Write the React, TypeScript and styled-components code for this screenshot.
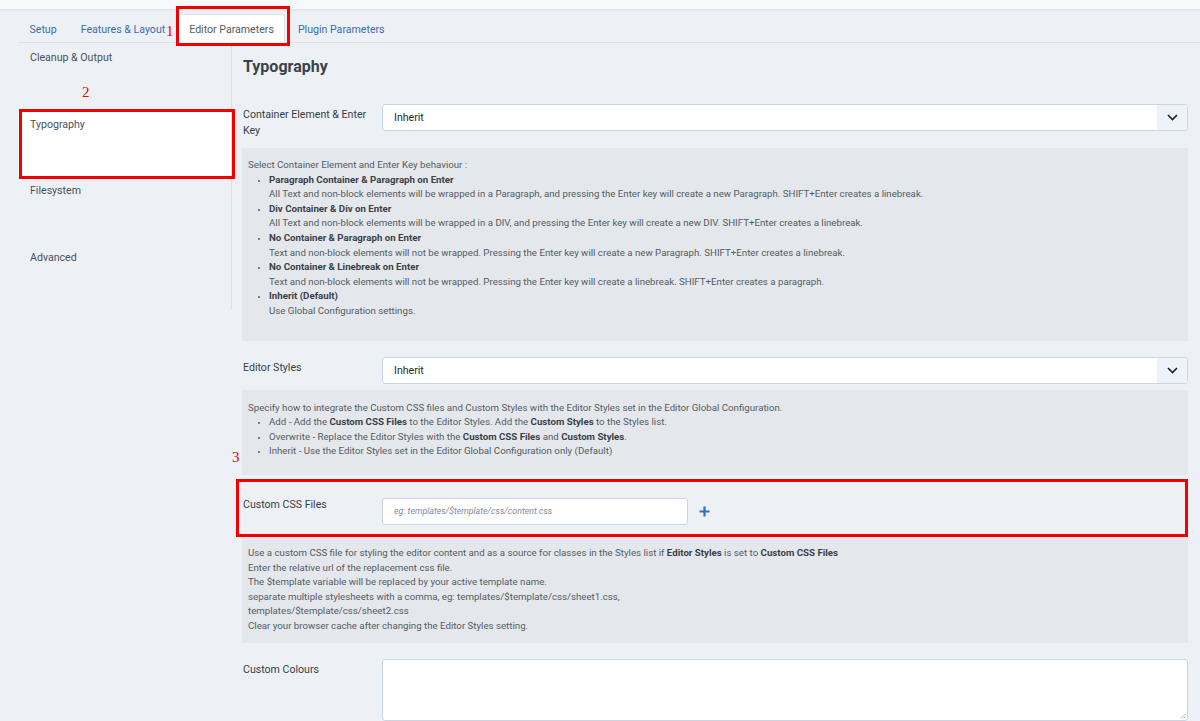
import React from 'react';
import styled, { createGlobalStyle } from 'styled-components';

const GlobalStyle = createGlobalStyle`
  html, body {
    margin: 0;
    padding: 0;
    background: #edf1f5;
    font-family: Roboto, "Liberation Sans", Arial, sans-serif;
    color: #3b4148;
  }
  * { box-sizing: border-box; }
`;

const Page = styled.div`
  position: relative;
  width: 1200px;
  height: 721px;
  overflow: hidden;
`;

const TopStrip = styled.div`
  height: 10px;
  background: #f7f9fb;
  border-bottom: 1px solid #e2e6eb;
  box-shadow: 0 1px 2px rgba(0, 0, 0, 0.03);
`;

const Shell = styled.div`
  padding-left: 18px;
`;

const TabBar = styled.nav`
  display: flex;
  margin-top: 4px;
  height: 29px;
  border-bottom: 1px solid #dce1e6;
`;

const Tab = styled.a<{ $active?: boolean }>`
  display: block;
  height: 29px;
  padding: 0 10.5px;
  margin-right: 1px;
  font-size: 10.6px;
  line-height: 30px;
  color: ${({ $active }) => ($active ? '#545a61' : '#3a6cb3')};
  background: ${({ $active }) => ($active ? '#ffffff' : 'transparent')};
  border: 1px solid ${({ $active }) => ($active ? '#dce1e6' : 'transparent')};
  border-bottom: none;
  border-radius: 3px 3px 0 0;
  cursor: pointer;
`;

const Body = styled.div`
  display: flex;
  align-items: flex-start;
`;

const Sidebar = styled.aside`
  width: 214px;
  flex-shrink: 0;
  border-right: 1px solid #dde2e7;
`;

const SideItem = styled.div<{ $active?: boolean }>`
  height: 66.7px;
  padding: 8px 12px;
  font-size: 10.6px;
  line-height: 14px;
  color: #4a5059;
  background: ${({ $active }) => ($active ? '#ffffff' : 'transparent')};
`;

const Main = styled.main`
  flex: 1;
  padding: 0 12px 0 10px;
`;

const Heading = styled.h2`
  margin: 13px 0 26px 1px;
  font-size: 16px;
  line-height: 22px;
  font-weight: 700;
  color: #3c4249;
`;

const Group = styled.section`
  & + & {
    margin-top: 16px;
  }
`;

const FieldRow = styled.div<{ $inset?: boolean }>`
  display: flex;
  align-items: flex-start;
  padding: ${({ $inset }) => ($inset ? '3px 0 6px' : '0')};
`;

const Label = styled.label`
  width: 140px;
  flex-shrink: 0;
  padding: 3px 6px 3px 1px;
  font-size: 10.6px;
  line-height: 16px;
  color: #373d44;
`;

const SelectBox = styled.div`
  flex: 1;
  display: flex;
  height: 27px;
  background: #ffffff;
  border: 1px solid #cbd5e1;
  border-radius: 3px;
  overflow: hidden;
`;

const SelectValue = styled.span`
  flex: 1;
  padding: 0 11px;
  font-size: 10.6px;
  line-height: 25px;
  color: #24292f;
`;

const SelectCaret = styled.span`
  width: 30px;
  display: flex;
  align-items: center;
  justify-content: center;
  background: #eef3fa;
`;

const Desc = styled.div<{ $pt: number; $pb: number }>`
  margin-top: 6px;
  padding: ${({ $pt, $pb }) => `${$pt}px 6px ${$pb}px`};
  background: #e4e8ec;
  font-size: 9.7px;
  line-height: 14.6px;
  color: #555b63;

  b {
    font-weight: 700;
    color: #3a4047;
  }
`;

const DescList = styled.ul`
  margin: 0;
  padding-left: 21px;
  list-style: disc;

  li::marker {
    font-size: 8px;
  }
`;

const InputWrap = styled.div`
  display: flex;
  align-items: center;
  margin-top: 4px;
`;

const TextInput = styled.div`
  width: 306px;
  height: 27px;
  padding: 0 11px;
  background: #ffffff;
  border: 1px solid #cbd5e1;
  border-radius: 3px;
  font-size: 8.8px;
  line-height: 25px;
  font-style: italic;
  color: #858b93;
`;

const AddButton = styled.span`
  display: flex;
  margin-left: 11px;
  cursor: pointer;
`;

const TextArea = styled.div`
  position: relative;
  flex: 1;
  height: 62px;
  background: #ffffff;
  border: 1px solid #cbd5e1;
  border-radius: 3px;
`;

const Grip = styled.svg`
  position: absolute;
  right: 1px;
  bottom: 1px;
`;

/* red hand-drawn annotation marks laid over the screenshot */
const Mark = styled.div<{ $x: number; $y: number; $w: number; $h: number }>`
  position: absolute;
  left: ${({ $x }) => $x}px;
  top: ${({ $y }) => $y}px;
  width: ${({ $w }) => $w}px;
  height: ${({ $h }) => $h}px;
  border: 3px solid #f00000;
  pointer-events: none;
`;

const MarkNum = styled.span<{ $x: number; $y: number }>`
  position: absolute;
  left: ${({ $x }) => $x}px;
  top: ${({ $y }) => $y}px;
  font-family: "Liberation Serif", "DejaVu Serif", serif;
  font-size: 15px;
  line-height: 15px;
  color: #f00000;
`;

const Chevron = () => (
  <svg width="11" height="7" viewBox="0 0 11 7">
    <path d="M1 1l4.5 4.5L10 1" fill="none" stroke="#1f2429" strokeWidth="1.7" />
  </svg>
);

const Plus = () => (
  <svg width="11" height="11" viewBox="0 0 11 11">
    <path d="M5.5 0.5v10M0.5 5.5h10" stroke="#2f6ebd" strokeWidth="2.2" />
  </svg>
);

const tabs = ['Setup', 'Features & Layout', 'Editor Parameters', 'Plugin Parameters'];
const sections = ['Cleanup & Output', 'Typography', 'Filesystem', 'Advanced'];

const App: React.FC = () => {
  return (
    <Page>
      <GlobalStyle />
      <TopStrip />
      <Shell>
        <TabBar>
          {tabs.map((t) => (
            <Tab key={t} $active={t === 'Editor Parameters'}>
              {t}
            </Tab>
          ))}
        </TabBar>

        <Body>
          <Sidebar>
            {sections.map((s) => (
              <SideItem key={s} $active={s === 'Typography'}>
                {s}
              </SideItem>
            ))}
          </Sidebar>

          <Main>
            <Heading>Typography</Heading>

            <Group>
              <FieldRow>
                <Label>Container Element &amp; Enter Key</Label>
                <SelectBox>
                  <SelectValue>Inherit</SelectValue>
                  <SelectCaret>
                    <Chevron />
                  </SelectCaret>
                </SelectBox>
              </FieldRow>
              <Desc $pt={10} $pb={22}>
                Select Container Element and Enter Key behaviour :
                <DescList>
                  <li>
                    <b>Paragraph Container &amp; Paragraph on Enter</b>
                    <br />
                    All Text and non-block elements will be wrapped in a Paragraph, and pressing the Enter key will
                    create a new Paragraph. SHIFT+Enter creates a linebreak.
                  </li>
                  <li>
                    <b>Div Container &amp; Div on Enter</b>
                    <br />
                    All Text and non-block elements will be wrapped in a DIV, and pressing the Enter key will create a
                    new DIV. SHIFT+Enter creates a linebreak.
                  </li>
                  <li>
                    <b>No Container &amp; Paragraph on Enter</b>
                    <br />
                    Text and non-block elements will not be wrapped. Pressing the Enter key will create a new
                    Paragraph. SHIFT+Enter creates a linebreak.
                  </li>
                  <li>
                    <b>No Container &amp; Linebreak on Enter</b>
                    <br />
                    Text and non-block elements will not be wrapped. Pressing the Enter key will create a linebreak.
                    SHIFT+Enter creates a paragraph.
                  </li>
                  <li>
                    <b>Inherit (Default)</b>
                    <br />
                    Use Global Configuration settings.
                  </li>
                </DescList>
              </Desc>
            </Group>

            <Group>
              <FieldRow>
                <Label>Editor Styles</Label>
                <SelectBox>
                  <SelectValue>Inherit</SelectValue>
                  <SelectCaret>
                    <Chevron />
                  </SelectCaret>
                </SelectBox>
              </FieldRow>
              <Desc $pt={11} $pb={16}>
                Specify how to integrate the Custom CSS files and Custom Styles with the Editor Styles set in the
                Editor Global Configuration.
                <DescList>
                  <li>
                    Add - Add the <b>Custom CSS Files</b> to the Editor Styles. Add the <b>Custom Styles</b> to the
                    Styles list.
                  </li>
                  <li>
                    Overwrite - Replace the Editor Styles with the <b>Custom CSS Files</b> and <b>Custom Styles</b>.
                  </li>
                  <li>Inherit - Use the Editor Styles set in the Editor Global Configuration only (Default)</li>
                </DescList>
              </Desc>
            </Group>

            <Group>
              <FieldRow $inset>
                <Label>Custom CSS Files</Label>
                <InputWrap>
                  <TextInput>eg: templates/$template/css/content.css</TextInput>
                  <AddButton>
                    <Plus />
                  </AddButton>
                </InputWrap>
              </FieldRow>
              <Desc $pt={9} $pb={10}>
                Use a custom CSS file for styling the editor content and as a source for classes in the Styles list
                if <b>Editor Styles</b> is set to <b>Custom CSS Files</b>
                <br />
                Enter the relative url of the replacement css file.
                <br />
                The $template variable will be replaced by your active template name.
                <br />
                separate multiple stylesheets with a comma, eg: templates/$template/css/sheet1.css,
                <br />
                templates/$template/css/sheet2.css
                <br />
                Clear your browser cache after changing the Editor Styles setting.
              </Desc>
            </Group>

            <Group>
              <FieldRow>
                <Label>Custom Colours</Label>
                <TextArea>
                  <Grip width="6" height="6" viewBox="0 0 6 6">
                    <path d="M5.5 1L1 5.5M5.5 3.5L3.5 5.5" stroke="#9aa3ad" strokeWidth="0.8" />
                  </Grip>
                </TextArea>
              </FieldRow>
            </Group>
          </Main>
        </Body>
      </Shell>

      <Mark $x={176} $y={6} $w={114} $h={40} />
      <MarkNum $x={166} $y={24}>1</MarkNum>
      <Mark $x={19} $y={109} $w={216} $h={70} />
      <MarkNum $x={82} $y={85}>2</MarkNum>
      <Mark $x={236} $y={479} $w={952} $h={58} />
      <MarkNum $x={232} $y={450}>3</MarkNum>
    </Page>
  );
};

export default App;
